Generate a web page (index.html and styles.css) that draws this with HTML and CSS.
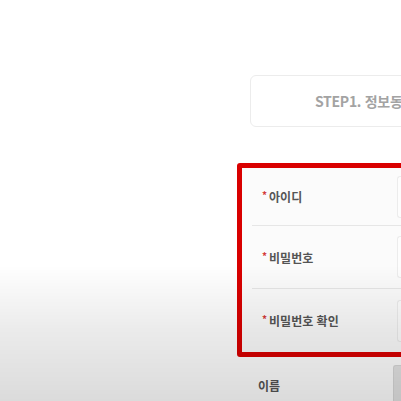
FILE: index.html
```html
<!DOCTYPE html>
<html lang="ko">
<head>
    <meta charset="UTF-8">
    <meta name="viewport" content="width=device-width, initial-scale=1.0">
    <title>회원가입</title>
    <link rel="stylesheet" href="styles.css">
</head>
<body>
    <div class="page">
        <div class="content">
            <div class="step-card">STEP1. 정보동의</div>

            <div class="form-box">
                <div class="row row-first">
                    <div class="label"><span class="req">*</span>아이디</div>
                    <div class="field"><div class="input"></div></div>
                </div>
                <div class="row">
                    <div class="label"><span class="req">*</span>비밀번호</div>
                    <div class="field"><div class="input"></div></div>
                </div>
                <div class="row row-last">
                    <div class="label"><span class="req">*</span>비밀번호 확인</div>
                    <div class="field"><div class="input"></div></div>
                </div>
            </div>

            <div class="row row-plain">
                <div class="label">이름</div>
                <div class="field"><div class="input input-dark"></div></div>
            </div>
        </div>
    </div>
    <div class="shade"></div>
</body>
</html>
```

FILE: styles.css
```css
html, body {
    margin: 0;
    padding: 0;
    width: 401px;
    height: 401px;
    overflow: hidden;
    background: #fff;
    font-family: "Noto Sans CJK KR", "Noto Sans", sans-serif;
}
.page {
    display: flex;
    padding-left: 237px;
    padding-top: 75px;
}
.content {
    width: 420px;
    flex-shrink: 0;
}
.step-card {
    margin-left: 13px;
    height: 52px;
    border: 1px solid #ececec;
    border-radius: 6px;
    box-sizing: border-box;
    padding-left: 64px;
    display: flex;
    align-items: center;
    font-size: 14px;
    font-weight: bold;
    color: #a3a3a3;
    letter-spacing: -0.3px;
    white-space: nowrap;
}
.form-box {
    margin-top: 36px;
    border: 5px solid #d90000;
    border-radius: 3px;
    background: #fbfbfb;
    padding-left: 10px;
}
.row {
    display: flex;
    align-items: center;
    height: 62px;
    border-bottom: 1px solid #e6e6e6;
}
.row-first {
    height: 57px;
}
.row-last {
    height: 63px;
    border-bottom: none;
}
.label {
    width: 145px;
    padding-left: 10px;
    font-size: 12px;
    font-weight: bold;
    color: #555;
    box-sizing: border-box;
    white-space: nowrap;
}
.req {
    color: #d43a3a;
    font-size: 10px;
    position: relative;
    top: -3px;
    margin-right: 2px;
}
.field {
    flex: 1;
    align-self: stretch;
    display: flex;
    align-items: center;
}
.input {
    width: 100%;
    height: 40px;
    border: 1px solid #ececec;
    border-right: none;
    border-radius: 3px 0 0 3px;
    background: #fdfdfd;
}
.row-plain {
    border-bottom: none;
    height: 56px;
    padding-left: 6px;
}
.row-plain .label {
    width: 150px;
    padding-left: 15px;
}
.row-plain .field {
    align-items: flex-end;
}
.input-dark {
    height: 46px;
    background: #e4e4e4;
    border-color: #d8d8d8;
}
.shade {
    position: fixed;
    left: 0;
    top: 0;
    width: 401px;
    height: 401px;
    pointer-events: none;
    background: linear-gradient(to bottom, rgba(0,0,0,0) 0px, rgba(0,0,0,0) 265px, rgba(0,0,0,0.08) 330px, rgba(0,0,0,0.14) 401px);
}
```
